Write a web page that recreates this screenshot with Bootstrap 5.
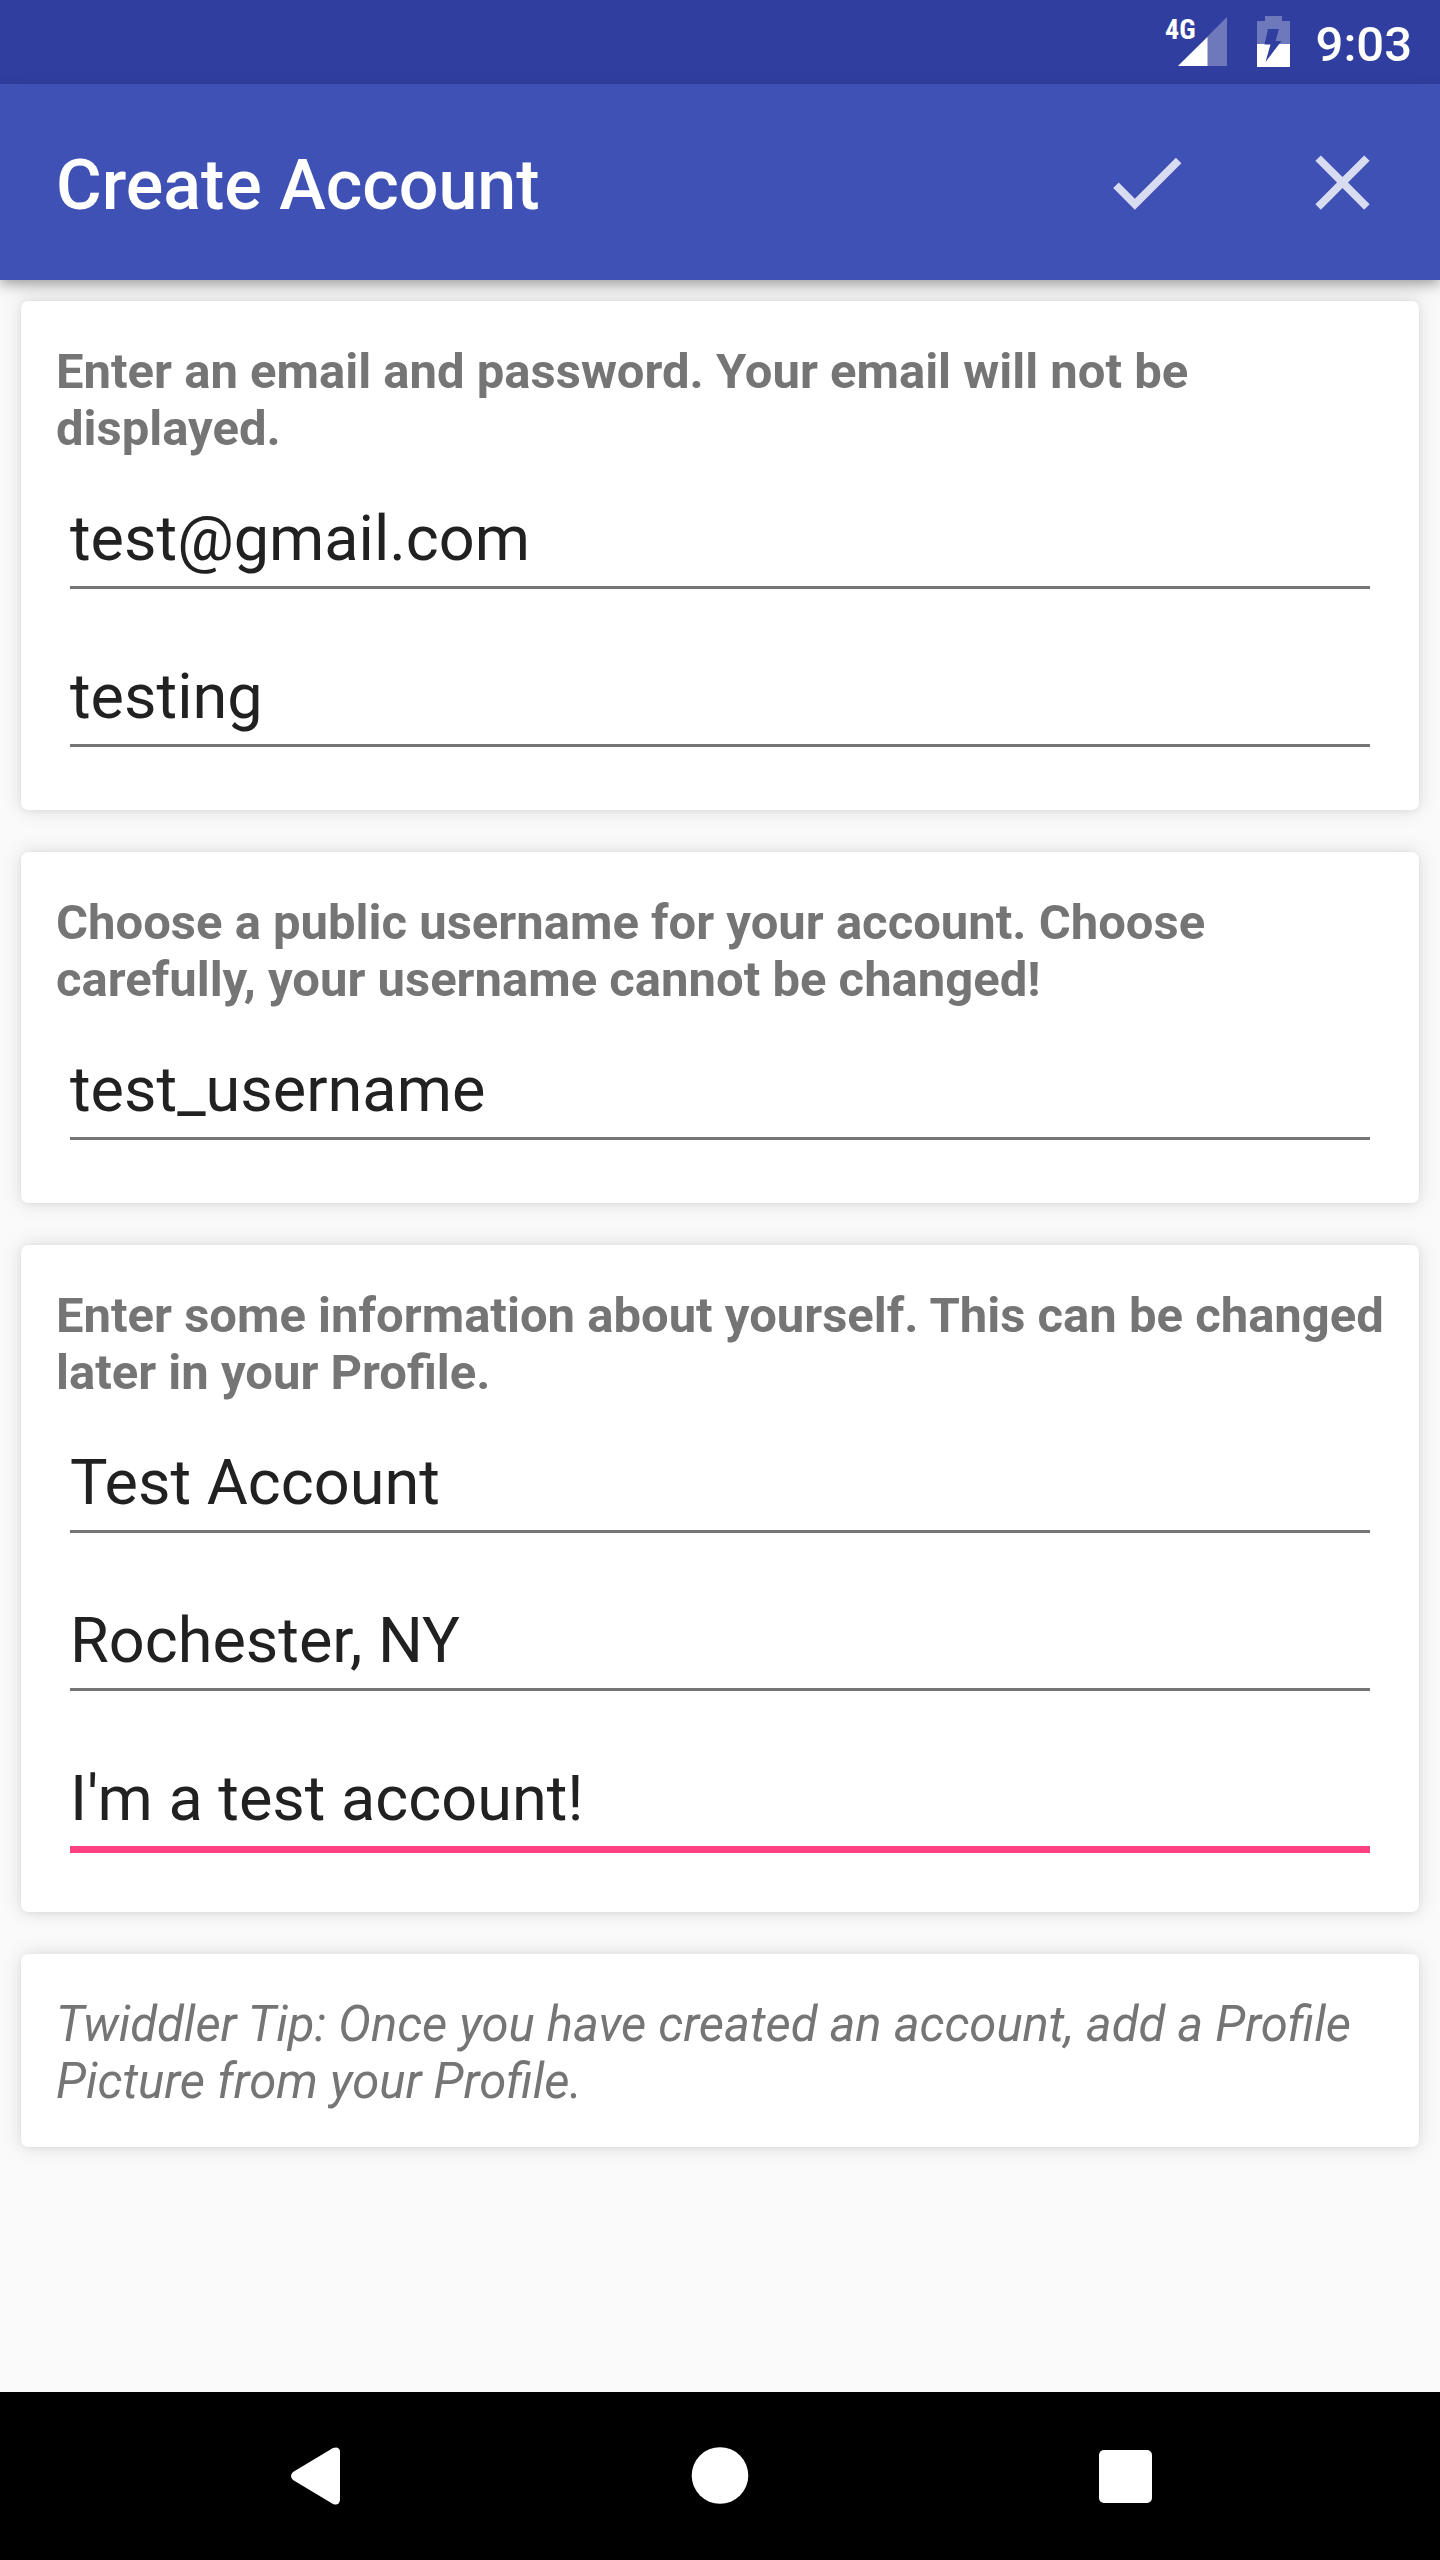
<!DOCTYPE html>
<html lang="en">
<head>
<meta charset="utf-8">
<meta name="viewport" content="width=device-width, initial-scale=1">
<title>Create Account</title>
<link rel="stylesheet" href="https://cdn.jsdelivr.net/npm/bootstrap@5.3.0/dist/css/bootstrap.min.css">
<style>
  body { font-family: Roboto, "Noto Sans", sans-serif; background: #fafafa; }
  .status-strip { height: 84px; background: #303f9f; padding-right: 28px; gap: 24px; }
  .status-strip time { font-size: 49px; line-height: 57px; font-weight: 500; padding-top: 4px; }
  .signal-text { font: 700 28px "Roboto Condensed", Roboto, sans-serif; }
  .app-header { height: 196px; background: #3f51b5; padding: 0 0 0 56px;
    box-shadow: 0 5px 10px rgba(0,0,0,.25), 0 8px 24px -4px rgba(0,0,0,.14); }
  .app-header h1 { font-size: 70px; line-height: 82px; font-weight: 500; padding-top: 6px; }
  .app-header .btn { width: 196px; height: 196px; }
  .form-stack { padding: 21px; gap: 42px; }
  .panel { border: 0; border-radius: 7px; padding: 42px 35px 37px;
    box-shadow: 0 0 20px rgba(0,0,0,.13), 0 1px 5px rgba(0,0,0,.06); }
  .panel-fields { padding-bottom: 63px; }
  .panel-lead, .tip-text { font-size: 49px; line-height: 57px; color: #757575; }
  .panel-lead { font-weight: 700; margin-bottom: 46px; }
  .field-stack { gap: 72px; padding: 0 14px; }
  .line-input { font-size: 63px; line-height: 74px; height: 86px; padding: 0 0 12px; color: #212121;
    border: 0; border-bottom: 3px solid #757575; border-radius: 0; background: transparent; }
  .line-input:focus, .line-input.is-current { background: transparent; color: #212121;
    border-color: #ff4081; box-shadow: 0 4px 0 #ff4081; }
  .nav-strip { height: 168px; padding: 0 111px; }
</style>
<script src="https://cdn.jsdelivr.net/npm/bootstrap@5.3.0/dist/js/bootstrap.bundle.min.js"></script>
</head>
<body class="d-flex flex-column min-vh-100">
  <div class="status-strip d-flex justify-content-end align-items-center text-white">
    <div class="d-flex align-items-center">
      <svg width="66" height="84" viewBox="1164 0 66 84" role="img" aria-label="4G signal">
        <text class="signal-text" x="1165" y="39" fill="#fff">4G</text>
        <path d="M1227 17V66H1178z" fill="#fff" fill-opacity=".3"/>
        <path d="M1207.500 37V66H1178z" fill="#fff"/>
      </svg>
      <svg class="ms-4" width="38" height="84" viewBox="1254 0 38 84" role="img" aria-label="Battery charging">
        <path d="M1265 16h17v5h8v23h-33V21h8z" fill="#fff" fill-opacity=".3"/>
        <path d="M1257 44h33v23h-33z" fill="#fff"/>
        <path d="M1268 29h11l-3.500 12h6l-16 21 5-17.500h-6z" fill="#303f9f"/>
      </svg>
    </div>
    <time>9:03</time>
  </div>

  <header class="app-header d-flex align-items-center text-white">
    <h1 class="m-0 me-auto">Create Account</h1>
    <button type="submit" form="account-form" class="btn border-0 rounded-0 p-0" aria-label="Save">
      <svg width="93" height="93" viewBox="0 0 24 24" fill="#fff" fill-opacity=".8"><path d="M9 16.170 4.830 12l-1.420 1.410L9 19 21 7l-1.410-1.410z"/></svg>
    </button>
    <button type="button" class="btn border-0 rounded-0 p-0" aria-label="Cancel">
      <svg width="93" height="93" viewBox="0 0 24 24" fill="#fff" fill-opacity=".8"><path d="M19 6.410 17.590 5 12 10.590 6.410 5 5 6.410 10.590 12 5 17.590 6.410 19 12 13.410 17.590 19 19 17.590 13.410 12z"/></svg>
    </button>
  </header>

  <main class="flex-grow-1">
    <form id="account-form" class="form-stack d-flex flex-column">
      <section class="panel panel-fields card" role="group" aria-labelledby="lead-login">
        <p class="panel-lead" id="lead-login">Enter an email and password. Your email will not be displayed.</p>
        <div class="field-stack d-flex flex-column">
          <input class="form-control line-input" type="text" aria-label="Email" value="test@gmail.com">
          <input class="form-control line-input" type="text" aria-label="Password" value="testing">
        </div>
      </section>
      <section class="panel panel-fields card" role="group" aria-labelledby="lead-username">
        <p class="panel-lead" id="lead-username">Choose a public username for your account. Choose carefully, your username cannot be changed!</p>
        <div class="field-stack d-flex flex-column">
          <input class="form-control line-input" type="text" aria-label="Username" value="test_username">
        </div>
      </section>
      <section class="panel panel-fields card" role="group" aria-labelledby="lead-about">
        <p class="panel-lead" id="lead-about">Enter some information about yourself. This can be changed later in your Profile.</p>
        <div class="field-stack d-flex flex-column">
          <input class="form-control line-input" type="text" aria-label="Name" value="Test Account">
          <input class="form-control line-input" type="text" aria-label="Location" value="Rochester, NY">
          <input class="form-control line-input is-current" type="text" aria-label="Bio" value="I'm a test account!">
        </div>
      </section>
      <div class="panel card">
        <p class="tip-text fst-italic m-0">Twiddler Tip: Once you have created an account, add a Profile Picture from your Profile.</p>
      </div>
    </form>
  </main>

  <nav class="nav-strip d-flex bg-black" aria-label="System">
    <button type="button" class="btn border-0 flex-fill p-0" aria-label="Back">
      <svg width="60" height="60" viewBox="0 0 60 60"><path d="M56 5V54Q55 60 49 58L9 34Q5 30 9 26L49 2Q55 0 56 5z" fill="#fff"/></svg>
    </button>
    <button type="button" class="btn border-0 flex-fill p-0" aria-label="Home">
      <svg width="60" height="60" viewBox="0 0 60 60"><circle cx="30" cy="29.500" r="28.300" fill="#fff"/></svg>
    </button>
    <button type="button" class="btn border-0 flex-fill p-0" aria-label="Recent apps">
      <svg width="60" height="60" viewBox="0 0 60 60"><rect x="3" y="4" width="53" height="53" rx="5" fill="#fff"/></svg>
    </button>
  </nav>
</body>
</html>
